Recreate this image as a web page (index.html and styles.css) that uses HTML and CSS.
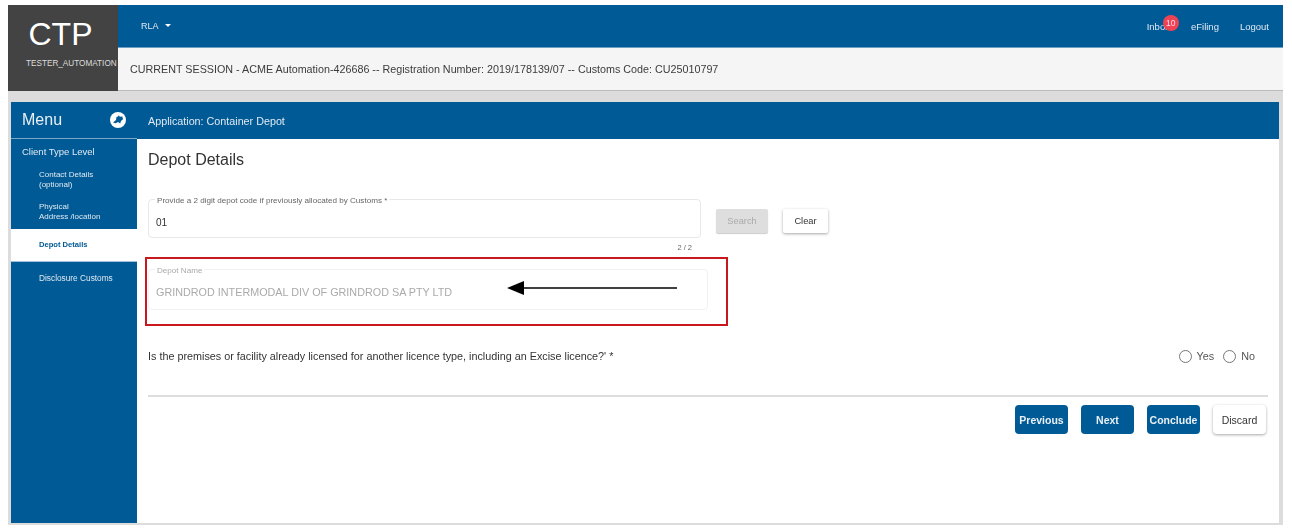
FILE: index.html
```html
<!DOCTYPE html>
<html lang="en">
<head>
<meta charset="utf-8">
<title>CTP - Depot Details</title>
<link rel="stylesheet" href="styles.css">
</head>
<body>
<div class="shell">
  <header class="header">
    <div class="brand">
      <div class="brand-name">CTP</div>
      <div class="brand-user">TESTER_AUTOMATION</div>
    </div>
    <div class="header-main">
      <div class="topbar">
        <span class="rla">RLA <i class="caret"></i></span>
        <nav class="topnav">
          <span class="inbox">Inbox<b class="badge">10</b></span>
          <span>eFiling</span>
          <span>Logout</span>
        </nav>
      </div>
      <div class="session">CURRENT SESSION - ACME Automation-426686 -- Registration Number: 2019/178139/07 -- Customs Code: CU25010797</div>
    </div>
  </header>
  <div class="band">
    <main class="app">
      <div class="menu-head">
        <span>Menu</span>
        <svg class="pin" viewBox="0 0 16 16" width="16" height="16"><circle cx="8" cy="8" r="8" fill="#fff"/><path d="M3 10.500 6 8 6.500 5l1.500-.5.800-1.200 1 1.400 2.500-.2.700 2.800-2 1.700-.8 2.500L8 10l-2.200 1.200z" fill="#005a96"/></svg>
      </div>
      <div class="app-head">Application: Container Depot</div>
      <aside class="side">
        <div class="side-title">Client Type Level</div>
        <div class="side-item two">Contact Details<br>(optional)</div>
        <div class="side-item two second">Physical<br>Address /location</div>
        <div class="side-item active">Depot Details</div>
        <div class="side-item last">Disclosure Customs</div>
      </aside>
      <section class="content">
        <h1 class="title">Depot Details</h1>
        <div class="code-row">
          <div class="code-col">
            <div class="field">
              <span class="legend">Provide a 2 digit depot code if previously allocated by Customs *</span>
              <span class="value">01</span>
            </div>
            <div class="counter">2 / 2</div>
          </div>
          <button class="btn btn-off">Search</button>
          <button class="btn btn-plain">Clear</button>
        </div>
        <div class="field field-off">
          <span class="legend">Depot Name</span>
          <span class="value">GRINDROD INTERMODAL DIV OF GRINDROD SA PTY LTD</span>
          <div class="redbox"></div>
          <svg class="arrow" viewBox="0 0 170 14" width="170" height="14"><path d="M17 7H170" stroke="#000" stroke-width="1.500" fill="none"/><path d="M0 7 17 0V14z" fill="#000"/></svg>
        </div>
        <div class="question">
          <span>Is the premises or facility already licensed for another licence type, including an Excise licence?' *</span>
          <div class="radios">
            <i class="radio"></i><span>Yes</span>
            <i class="radio"></i><span>No</span>
          </div>
        </div>
        <hr class="rule">
        <div class="actions">
          <button class="btn btn-blue">Previous</button>
          <button class="btn btn-blue">Next</button>
          <button class="btn btn-blue">Conclude</button>
          <button class="btn btn-plain">Discard</button>
        </div>
      </section>
    </main>
  </div>
</div>
</body>
</html>
```
FILE: styles.css
```css
* { box-sizing: border-box; }
html, body { margin: 0; height: 100%; background: #fff; overflow: hidden; }
body {
  padding: 5px 9px 6px 8px;
  font-family: "Liberation Sans", Arial, sans-serif;
  color: #333;
}
.shell { height: 520px; display: flex; flex-direction: column; filter: blur(0.4px); }
.header { display: flex; height: 86px; flex: none; }
.brand { width: 110px; background: #434343; color: #fff; text-align: center; flex: none; overflow: hidden; }
.brand-name { font-size: 32px; line-height: 30px; margin-top: 14px; margin-right: 5px; }
.brand-user { font-size: 8.200px; line-height: 10px; margin-top: 10px; color: #ddd; white-space: nowrap; padding-left: 18px; text-align: left; }
.header-main { flex: 1; display: flex; flex-direction: column; }
.topbar {
  height: 43px; background: #005a96; color: #dfe9f2; font-size: 9px;
  display: flex; align-items: center; justify-content: space-between;
  padding: 0 14px 0 23px; border-bottom: 1px solid #6d9fc2;
}
.caret { display: inline-block; margin-left: 4px; vertical-align: 2px; border: 3px solid transparent; border-top: 3.500px solid #fff; border-bottom: 0; }
.topnav { display: flex; gap: 21px; padding-top: 1px; font-size: 9.500px; }
.inbox { position: relative; }
.badge {
  position: absolute; left: 16px; top: -6px; width: 16px; height: 16px; border-radius: 50%;
  background: #ee4354; color: #fde; font-size: 8.500px; font-weight: 400; line-height: 16px; text-align: center;
}
.session {
  flex: 1; background: #f5f5f5; color: #3c3c3c; font-size: 10.750px;
  display: flex; align-items: center; padding: 0 0 0 12px; border-bottom: 1px solid #bbb;
}
.band { flex: 1; background: #dcdcdc; padding: 11px 4px 2px 3px; min-height: 0; }
.app {
  height: 100%; background: #fff; display: grid;
  grid-template-columns: 126px 1fr; grid-template-rows: 37px 1fr;
}
.menu-head {
  background: #005a96; color: #e8f0f6; font-size: 16px; display: flex; align-items: center;
  justify-content: space-between; padding: 0 11px; border-bottom: 1px solid #7aa8c8;
}
.pin { flex: none; }
.app-head { background: #005a96; color: #dfe9f2; font-size: 10.750px; display: flex; align-items: center; padding-left: 11px; }
.side { background: #005a96; color: #dfe9f2; }
.side-title { padding: 8px 0 0 11px; height: 26px; font-size: 9.500px; line-height: 10px; }
.side-item { padding-left: 28px; font-size: 8px; line-height: 10px; }
.side-item.two { height: 35px; padding-top: 5px; }
.side-item.second { height: 29px; padding-top: 2px; }
.side-item.active {
  background: #fff; color: #005a96; height: 33px; line-height: 31px; font-weight: 700;
  font-size: 7.600px; border-bottom: 1px solid #9fc0d8;
}
.side-item.last { padding-top: 11px; font-size: 8.300px; }
.content { padding: 13px 11px 0 11px; min-width: 0; }
.title { font-size: 16px; font-weight: 400; margin: 0; line-height: 16px; height: 47px; color: #333; }
.code-row { display: flex; align-items: flex-start; height: 70px; }
.code-col { width: 553px; flex: none; }
.field {
  position: relative; height: 39px; border: 1px solid #e8e8e8; border-radius: 4px;
  padding: 17px 0 0 7px; font-size: 10px; color: #333;
}
.legend {
  position: absolute; left: 6px; top: -3px; background: #fff; padding: 0 2px;
  font-size: 8.100px; line-height: 8px; color: #666; white-space: nowrap;
}
.value { display: block; line-height: 11px; }
.counter { font-size: 7.500px; line-height: 9px; text-align: right; padding: 5px 9px 0 0; color: #666; }
.btn {
  font-family: inherit; font-size: 9.300px; height: 24px; border: 0; border-radius: 2px; padding: 0;
}
.code-row .btn { margin-top: 10px; }
.btn-off { width: 52px; margin-left: 15px; background: #dedede; color: #aaa; box-shadow: 0 1px 1px #ccc; }
.btn-plain { background: #fff; color: #333; box-shadow: 0 1px 3px rgba(0,0,0,.35); }
.code-row .btn-plain { width: 45px; margin-left: 15px; }
.field-off { width: 560px; height: 41px; border-color: #f1f1f1; color: #aaa; padding-top: 17px; font-size: 10.800px; }
.field-off .legend { color: #aaa; }
.redbox { position: absolute; left: -4px; top: -13px; width: 583px; height: 69px; border: 2px solid #c9171e; }
.arrow { position: absolute; left: 358px; top: 11px; }
.question {
  display: flex; justify-content: space-between; align-items: center; height: 16px;
  margin-top: 38px; font-size: 10.800px; color: #333;
}
.radios { display: flex; align-items: center; margin-right: 13px; color: #555; }
.radio { width: 13px; height: 13px; border: 1.500px solid #777; border-radius: 50%; margin: 0 5px 0 9px; }
.rule { border: 0; border-top: 2px solid #ddd; margin: 31px 0 0; }
.actions { display: flex; justify-content: flex-end; gap: 13px; margin-top: 8px; padding-right: 2px; }
.actions .btn { height: 29px; width: 53px; border-radius: 4px; font-size: 10.500px; }
.btn-blue { background: #005a96; color: #e8f0f6; font-weight: 700; }
```
